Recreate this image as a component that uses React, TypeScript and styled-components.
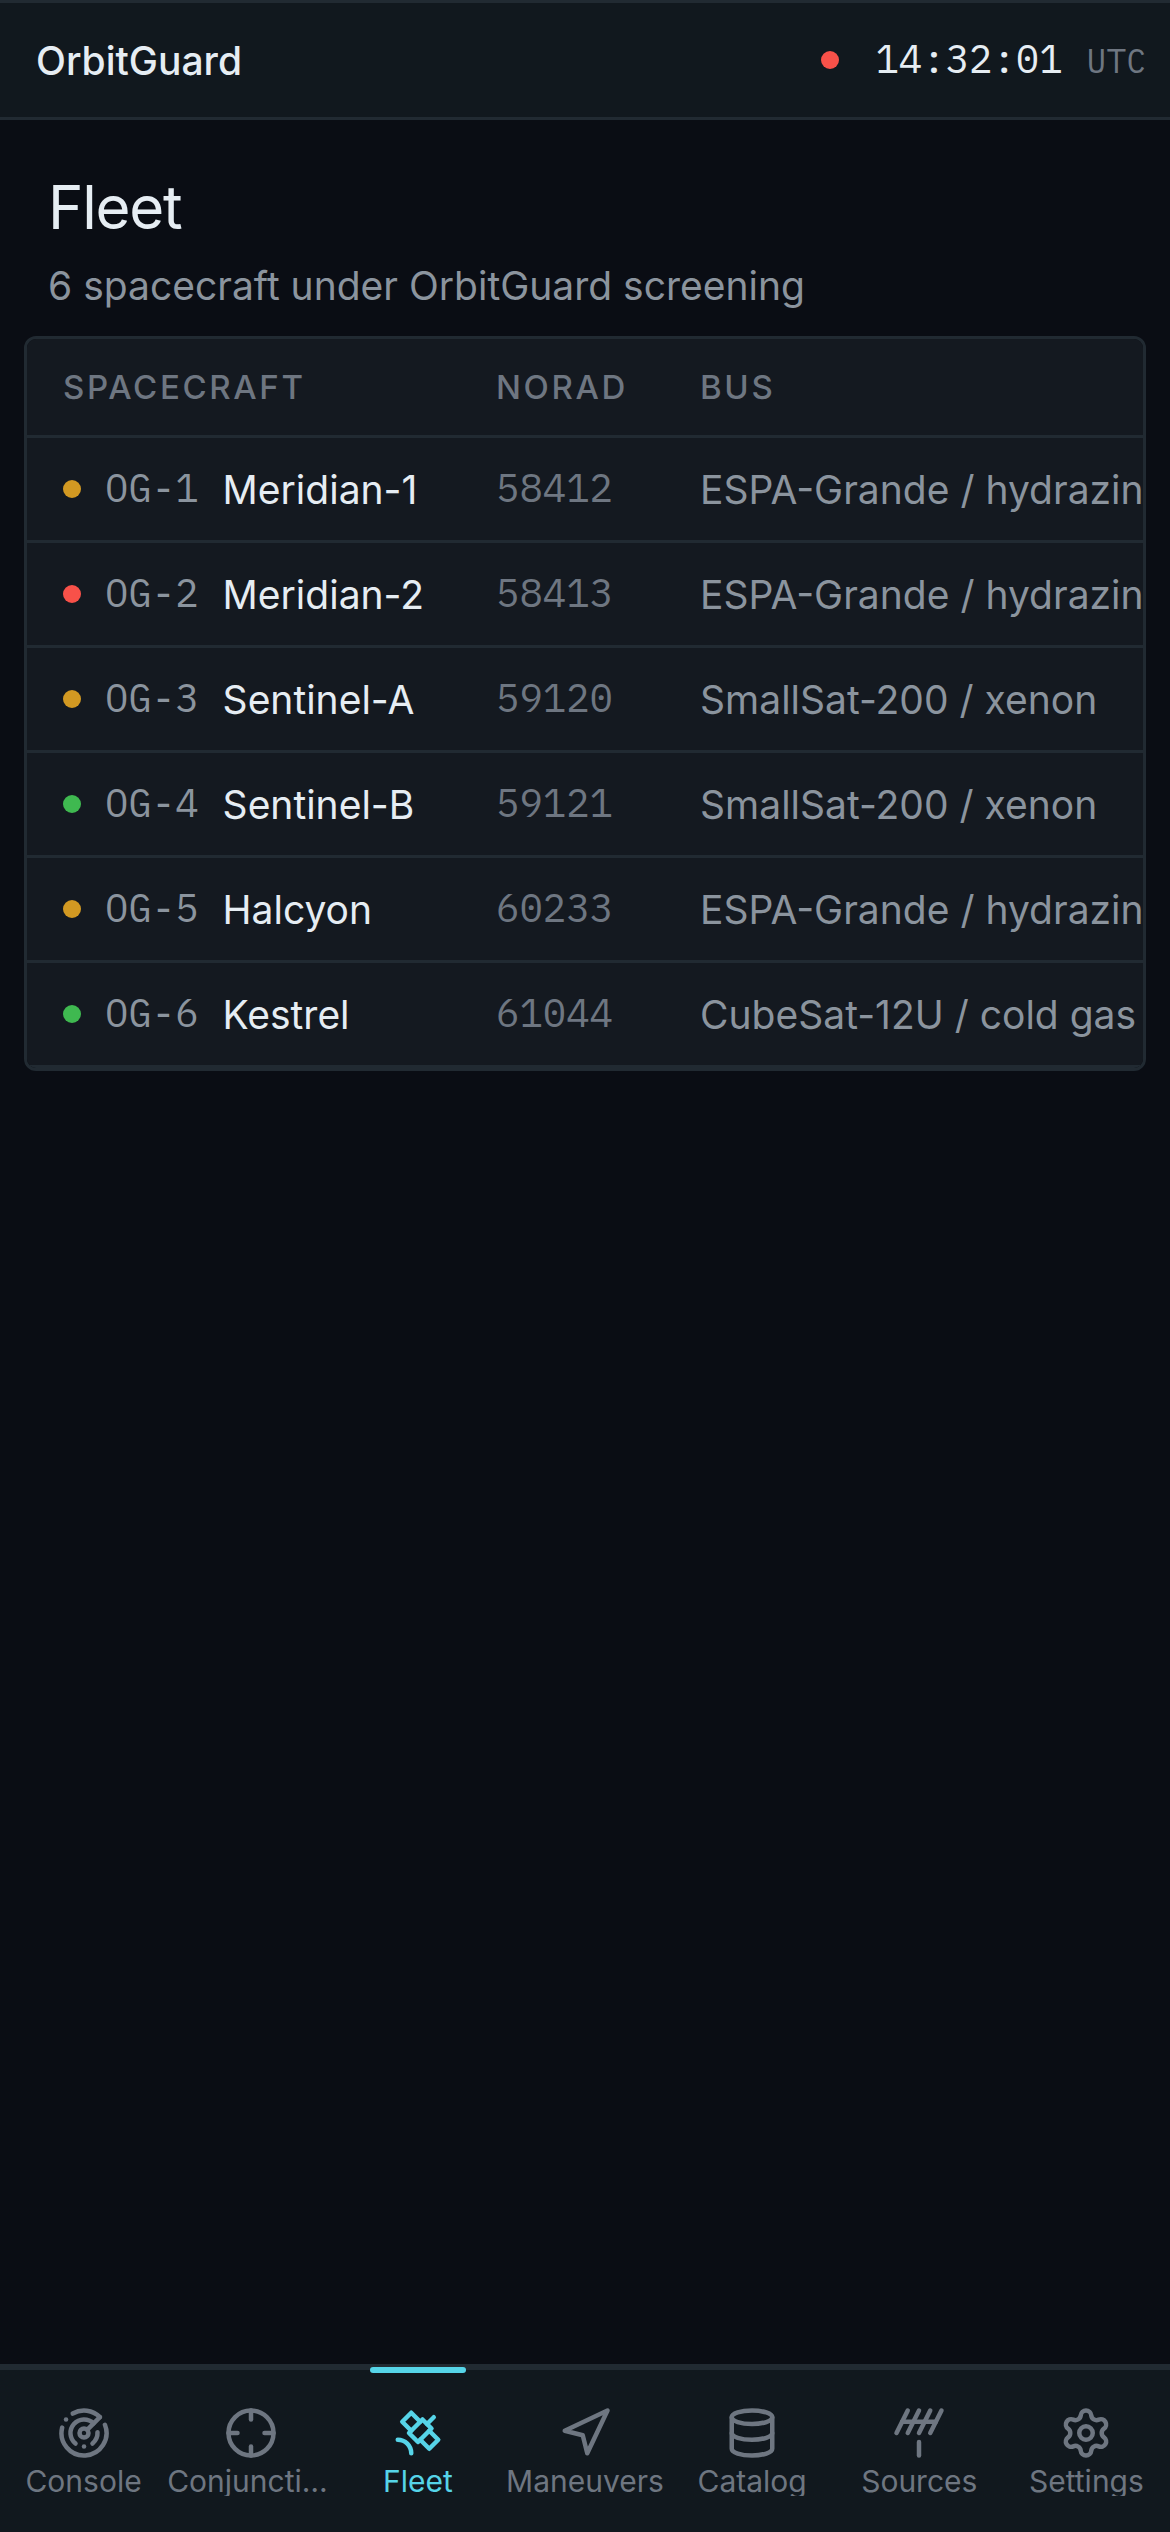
import React from "react";
import styled, { createGlobalStyle } from "styled-components";
import { Antenna, Crosshair, Radar, Settings } from "lucide-react";

const color = {
  page: "#0a0d14",
  bar: "#11181e",
  card: "#141920",
  line: "#212a32",
  text: "#e6edf3",
  muted: "#8b949e",
  faint: "#6e7681",
  accent: "#56d4e8",
  red: "#f85149",
  amber: "#d29922",
  green: "#3fb950",
};

const sans = `Inter, "Noto Sans", sans-serif`;
const mono = `"IBM Plex Mono", "Liberation Mono", monospace`;

const GlobalStyle = createGlobalStyle`
  *, *::before, *::after { box-sizing: border-box; }
  body {
    margin: 0;
    background: ${color.page};
    color: ${color.text};
    font-family: ${sans};
    font-size: 39px;
  }
`;

const Shell = styled.div`
  display: flex;
  flex-direction: column;
  min-height: 100vh;
`;

const TopBar = styled.header`
  display: flex;
  align-items: center;
  justify-content: space-between;
  height: 120px;
  padding: 0 24px 0 36px;
  background: ${color.bar};
  border-top: 3px solid ${color.line};
  border-bottom: 3px solid ${color.line};
`;

const Brand = styled.span`
  font-weight: 500;
`;

const Clock = styled.div`
  display: flex;
  align-items: center;
  gap: 36px;
`;

const Dot = styled.span<{ $tone: string }>`
  flex: none;
  width: 18px;
  height: 18px;
  border-radius: 50%;
  background: ${(p) => p.$tone};
`;

const Reading = styled.div`
  display: flex;
  align-items: baseline;
  gap: 24px;
  padding-bottom: 4px;
  font-family: ${mono};
`;

const Zone = styled.span`
  color: ${color.faint};
  font-size: 33px;
`;

const Main = styled.main`
  flex: 1;
  padding: 48px 24px;
`;

const PageHead = styled.div`
  display: flex;
  flex-direction: column;
  padding: 0 24px;
`;

const Title = styled.h1`
  margin: 0;
  font-size: 60px;
  font-weight: 400;
  line-height: 78px;
  letter-spacing: -0.02em;
`;

const Subtitle = styled.p`
  margin: 10px 0 20px;
  color: ${color.muted};
  line-height: 60px;
`;

const Card = styled.section`
  overflow-x: auto;
  scrollbar-width: none;
  background: ${color.card};
  border: 3px solid ${color.line};
  border-radius: 12px;
`;

const Table = styled.table`
  width: 100%;
  border-spacing: 0;
  white-space: nowrap;
  text-align: left;
`;

const HeadCell = styled.th`
  height: 99px;
  padding: 0 36px;
  border-bottom: 3px solid ${color.line};
  color: ${color.faint};
  font-size: 33px;
  font-weight: 500;
  letter-spacing: 0.08em;
`;

const Cell = styled.td`
  height: 105px;
  padding: 0 36px;
  border-bottom: 3px solid ${color.line};
  color: ${color.muted};
`;

const NumberCell = styled(Cell)`
  padding-bottom: 4px;
  color: ${color.faint};
  font-family: ${mono};
`;

const Craft = styled.div`
  display: flex;
  align-items: center;
  gap: 24px;
`;

const CraftId = styled.span`
  padding-bottom: 4px;
  font-family: ${mono};
`;

const CraftName = styled.span`
  color: ${color.text};
`;

const TabBar = styled.nav`
  position: sticky;
  bottom: 0;
  background: ${color.bar};
  border-top: 3px solid ${color.line};
`;

const TabList = styled.div`
  display: flex;
  border-top: 3px solid ${color.line};
`;

const Tab = styled.a<{ $active: boolean }>`
  position: relative;
  display: flex;
  flex: 1 1 0;
  min-width: 0;
  flex-direction: column;
  align-items: center;
  gap: 6px;
  padding: 36px 0;
  color: ${(p) => (p.$active ? color.accent : color.faint)};
  text-decoration: none;

  &::before {
    content: "";
    display: ${(p) => (p.$active ? "block" : "none")};
    position: absolute;
    top: -3px;
    width: 96px;
    height: 6px;
    border-radius: 3px;
    background: ${color.accent};
  }
`;

const TabLabel = styled.span`
  max-width: 100%;
  overflow: hidden;
  font-size: 30px;
  line-height: 30px;
  text-overflow: ellipsis;
  white-space: nowrap;
`;

const Glyph = styled.svg.attrs({
  width: 54,
  height: 54,
  viewBox: "0 0 24 24",
  fill: "none",
  stroke: "currentColor",
  strokeWidth: 2,
  strokeLinecap: "round",
  strokeLinejoin: "round",
})`
  flex: none;
`;

const SatelliteIcon = () => (
  <Glyph>
    <path d="M13 7 9 3 5 7l4 4" />
    <path d="m17 11 4 4-4 4-4-4" />
    <path d="m8 12 4 4 6-6-4-4Z" />
    <path d="m16 8 3-3" />
    <path d="M9 21a6 6 0 0 0-6-6" />
  </Glyph>
);

const ArrowIcon = () => (
  <Glyph>
    <polygon points="3 11 22 2 13 21 11 13 3 11" />
  </Glyph>
);

const DatabaseIcon = () => (
  <Glyph>
    <ellipse cx="12" cy="5" rx="9" ry="3" />
    <path d="M3 5v14a9 3 0 0 0 18 0V5" />
    <path d="M3 12a9 3 0 0 0 18 0" />
  </Glyph>
);

const fleet = [
  { id: "OG-1", name: "Meridian-1", norad: "58412", bus: "ESPA-Grande / hydrazine", tone: color.amber },
  { id: "OG-2", name: "Meridian-2", norad: "58413", bus: "ESPA-Grande / hydrazine", tone: color.red },
  { id: "OG-3", name: "Sentinel-A", norad: "59120", bus: "SmallSat-200 / xenon", tone: color.amber },
  { id: "OG-4", name: "Sentinel-B", norad: "59121", bus: "SmallSat-200 / xenon", tone: color.green },
  { id: "OG-5", name: "Halcyon", norad: "60233", bus: "ESPA-Grande / hydrazine", tone: color.amber },
  { id: "OG-6", name: "Kestrel", norad: "61044", bus: "CubeSat-12U / cold gas", tone: color.green },
];

const tabs = [
  { label: "Console", icon: <Radar size={54} /> },
  { label: "Conjunctions", icon: <Crosshair size={54} /> },
  { label: "Fleet", icon: <SatelliteIcon /> },
  { label: "Maneuvers", icon: <ArrowIcon /> },
  { label: "Catalog", icon: <DatabaseIcon /> },
  { label: "Sources", icon: <Antenna size={54} /> },
  { label: "Settings", icon: <Settings size={54} /> },
];

export default function App() {
  return (
    <Shell>
      <GlobalStyle />
      <TopBar>
        <Brand>OrbitGuard</Brand>
        <Clock>
          <Dot $tone={color.red} />
          <Reading>
            <time>14:32:01</time>
            <Zone>UTC</Zone>
          </Reading>
        </Clock>
      </TopBar>
      <Main>
        <PageHead>
          <Title>Fleet</Title>
          <Subtitle>{fleet.length} spacecraft under OrbitGuard screening</Subtitle>
        </PageHead>
        <Card>
          <Table>
            <thead>
              <tr>
                <HeadCell scope="col">SPACECRAFT</HeadCell>
                <HeadCell scope="col">NORAD</HeadCell>
                <HeadCell scope="col">BUS</HeadCell>
              </tr>
            </thead>
            <tbody>
              {fleet.map((craft) => (
                <tr key={craft.id}>
                  <Cell>
                    <Craft>
                      <Dot $tone={craft.tone} />
                      <CraftId>{craft.id}</CraftId>
                      <CraftName>{craft.name}</CraftName>
                    </Craft>
                  </Cell>
                  <NumberCell>{craft.norad}</NumberCell>
                  <Cell>{craft.bus}</Cell>
                </tr>
              ))}
            </tbody>
          </Table>
        </Card>
      </Main>
      <TabBar aria-label="Primary">
        <TabList>
          {tabs.map((tab) => (
            <Tab
              key={tab.label}
              href={`#${tab.label.toLowerCase()}`}
              $active={tab.label === "Fleet"}
              aria-current={tab.label === "Fleet" ? "page" : undefined}
            >
              {tab.icon}
              <TabLabel>{tab.label}</TabLabel>
            </Tab>
          ))}
        </TabList>
      </TabBar>
    </Shell>
  );
}
